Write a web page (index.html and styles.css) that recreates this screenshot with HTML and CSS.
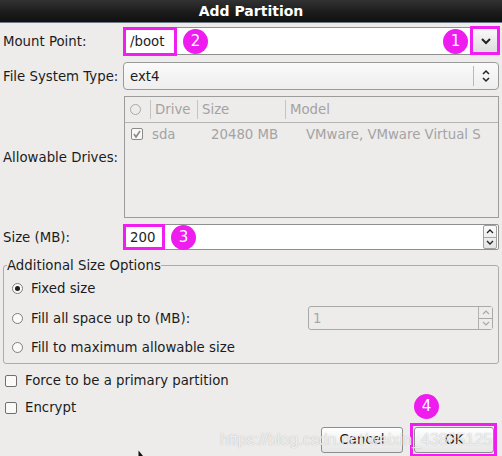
FILE: index.html
```html
<!DOCTYPE html>
<html>
<head>
<meta charset="utf-8">
<link rel="stylesheet" href="styles.css">
</head>
<body>
<div class="dialog">
  <div class="titlebar">Add Partition</div>
  <div class="content">
    <div class="row row-mount">
      <div class="label">Mount Point:</div>
      <div class="combo-entry">
        <div class="entry-text">/boot</div>
        <div class="drop-btn">
          <svg width="12" height="8" viewBox="0 0 12 8"><path d="M2 2 L6 6 L10 2" fill="none" stroke="#222" stroke-width="2"/></svg>
        </div>
        <div class="mark mark-boot"></div>
        <div class="badge badge-2">2</div>
        <div class="badge badge-1">1</div>
        <div class="mark mark-drop"></div>
      </div>
    </div>

    <div class="row row-fs">
      <div class="label">File System Type:</div>
      <div class="combo">
        <div class="entry-text">ext4</div>
        <div class="combo-arrows">
          <svg width="10" height="16" viewBox="0 0 10 16"><path d="M2 6 L5 3 L8 6 M2 10 L5 13 L8 10" fill="none" stroke="#222" stroke-width="1.5"/></svg>
        </div>
      </div>
    </div>

    <div class="row row-drives">
      <div class="label">Allowable Drives:</div>
      <div class="drives">
        <div class="drives-head">
          <div class="dh dh-check"><span class="ring"></span></div>
          <div class="dh dh-drive">Drive</div>
          <div class="dh dh-size">Size</div>
          <div class="dh dh-model">Model</div>
        </div>
        <div class="drives-row">
          <div class="dc dc-check"><span class="cb checked">
            <svg width="10" height="10" viewBox="0 0 10 10"><path d="M2 5 L4 8 L8 2" fill="none" stroke="#8a8a8a" stroke-width="1.6"/></svg>
          </span></div>
          <div class="dc dc-drive">sda</div>
          <div class="dc dc-size">20480 MB</div>
          <div class="dc dc-model">VMware, VMware Virtual S</div>
        </div>
      </div>
    </div>

    <div class="row row-size">
      <div class="label">Size (MB):</div>
      <div class="spin">
        <div class="entry-text">200</div>
        <div class="spin-arrows">
          <div class="sa"><svg width="8" height="6" viewBox="0 0 8 6"><path d="M1 5 L4 2 L7 5" fill="none" stroke="#222" stroke-width="1.3"/></svg></div>
          <div class="sa"><svg width="8" height="6" viewBox="0 0 8 6"><path d="M1 1 L4 4 L7 1" fill="none" stroke="#222" stroke-width="1.3"/></svg></div>
        </div>
        <div class="mark mark-size"></div>
        <div class="badge badge-3">3</div>
      </div>
    </div>

    <fieldset class="options">
      <legend>Additional Size Options</legend>
      <div class="opt"><span class="radio on"></span>Fixed size</div>
      <div class="opt opt-fill">
        <span class="radio"></span>Fill all space up to (MB):
        <div class="spin spin-dis">
          <div class="entry-text">1</div>
          <div class="spin-arrows">
            <div class="sa"><svg width="8" height="6" viewBox="0 0 8 6"><path d="M1 5 L4 2 L7 5" fill="none" stroke="#a8a8a8" stroke-width="1.2"/></svg></div>
            <div class="sa"><svg width="8" height="6" viewBox="0 0 8 6"><path d="M1 1 L4 4 L7 1" fill="none" stroke="#a8a8a8" stroke-width="1.2"/></svg></div>
          </div>
        </div>
      </div>
      <div class="opt"><span class="radio"></span>Fill to maximum allowable size</div>
    </fieldset>

    <div class="check check-first"><span class="cb"></span>Force to be a primary partition</div>
    <div class="check"><span class="cb"></span>Encrypt</div>

    <div class="buttons">
      <div class="watermark">https://blog.csdn.net/weixin_43885125</div>
      <div class="btn btn-cancel">Cancel</div>
      <div class="btn btn-ok">OK</div>
      <div class="mark mark-ok"></div>
      <div class="badge badge-4">4</div>
    </div>
  </div>
  <svg class="cursor" width="8" height="6" viewBox="0 0 8 6"><path d="M0.5 0.5 L0.5 6 L5 6 Z" fill="#111"/></svg>
</div>
</body>
</html>
```

FILE: styles.css
```css
html, body {
  margin: 0;
  padding: 0;
}
body {
  width: 502px;
  height: 456px;
  overflow: hidden;
  background: #edeceb;
  font-family: "DejaVu Sans", sans-serif;
  font-size: 13.3px;
  color: #1c1c1c;
}
.dialog {
  position: relative;
  width: 502px;
  height: 456px;
}
.titlebar {
  height: 22px;
  line-height: 23px;
  text-align: center;
  color: #fff;
  font-weight: bold;
  font-size: 14px;
  background: linear-gradient(#323232, #1a1a1a 60%, #111);
  border-bottom: 1px solid #6d7a86;
}
.content {
  padding: 4px 3px 0 3px;
}
.row {
  display: flex;
  align-items: center;
}
.label {
  width: 120px;
  flex: none;
}
.entry-text {
  flex: 1;
  padding-left: 6px;
}
.combo-entry {
  position: relative;
  flex: 1;
  height: 26px;
  display: flex;
  align-items: center;
  background: #fff;
  border: 1px solid #8f8f8f;
  border-radius: 2px;
}
.drop-btn {
  width: 27px;
  height: 26px;
  margin-right: -1px;
  display: flex;
  align-items: center;
  justify-content: center;
  background: linear-gradient(#fbfbfb, #dcdcdc);
  border-left: 1px solid #a8a8a8;
  border-bottom: 1px solid #7a97b3;
  box-sizing: border-box;
}
.row-fs {
  margin-top: 7px;
}
.combo {
  flex: 1;
  height: 26px;
  display: flex;
  align-items: center;
  border: 1px solid #9a9a9a;
  border-radius: 4px;
  background: linear-gradient(#fafafa, #eeeeee);
}
.combo-arrows {
  width: 24px;
  height: 20px;
  border-left: 1px solid #b9b9b9;
  display: flex;
  align-items: center;
  justify-content: center;
}
.row-drives {
  margin-top: 6px;
}
.drives {
  flex: 1;
  margin-left: 1px;
  height: 120px;
  border: 1px solid #9c9c9c;
  color: #a3a3a3;
}
.drives-head {
  display: flex;
  height: 25px;
  align-items: center;
  border-bottom: 1px solid #b4b4b4;
}
.dh {
  height: 19px;
  line-height: 19px;
  border-right: 1px solid #c4c4c4;
  padding-left: 4px;
}
.dh-check { width: 20px; padding-left: 5px; display: flex; align-items: center; }
.dh-drive { width: 42px; }
.dh-size { width: 83px; }
.dh-model { border-right: none; }
.ring {
  display: inline-block;
  width: 9px;
  height: 9px;
  border: 1px solid #a8a8a8;
  border-radius: 50%;
}
.drives-row {
  display: flex;
  height: 22px;
  align-items: center;
}
.dc-check { width: 21px; padding-left: 6px; display: flex; }
.dc-drive { width: 59px; }
.dc-size { width: 95px; }
.cb {
  display: inline-flex;
  align-items: center;
  justify-content: center;
  width: 10px;
  height: 10px;
  border: 1px solid #8a8a8a;
  border-radius: 2px;
  background: #f8f8f8;
  flex: none;
}
.row-size {
  margin-top: 6px;
}
.spin {
  position: relative;
  flex: 1;
  height: 24px;
  display: flex;
  align-items: center;
  background: #fff;
  border: 1px solid #8f8f8f;
  border-radius: 2px;
}
.spin-arrows {
  width: 12px;
  height: 22px;
  margin-right: 1px;
  display: flex;
  flex-direction: column;
  border: 1px solid #a0a0a0;
  border-radius: 2px;
  background: linear-gradient(#fafafa, #e4e4e4);
}
.sa {
  flex: 1;
  display: flex;
  align-items: center;
  justify-content: center;
}
.sa + .sa {
  border-top: 1px solid #a8a8a8;
}
.options {
  margin: 8px 0 0 0;
  padding: 1px 0 1px 0;
  border: 1px solid #acacac;
  border-radius: 3px;
}
.options legend {
  padding: 0;
  margin-left: 3px;
}
.opt {
  display: flex;
  align-items: center;
  height: 29px;
  padding-left: 8px;
}
.radio {
  width: 11px;
  height: 11px;
  border: 1px solid #7e7e7e;
  border-radius: 50%;
  background: #fafafa;
  margin-right: 8px;
  display: inline-flex;
  align-items: center;
  justify-content: center;
  box-sizing: border-box;
  flex: none;
}
.radio.on::after {
  content: "";
  width: 5px;
  height: 5px;
  border-radius: 50%;
  background: #1e1e1e;
}
.opt-fill {
  height: 30px;
}
.spin-dis {
  flex: none;
  width: 183px;
  height: 22px;
  margin-left: auto;
  margin-right: 5px;
  background: #edeceb;
  border-color: #a9a9a9;
  color: #a8a8a8;
  border-radius: 3px;
}
.spin-dis .entry-text {
  padding-left: 4px;
}
.spin-dis .spin-arrows {
  height: 22px;
  width: 13px;
  margin-right: 0;
  border: none;
  border-left: 1px solid #b0b0b0;
  border-radius: 0;
  background: #edeceb;
}
.check {
  display: flex;
  align-items: center;
  height: 27px;
  padding-left: 2px;
}
.check .cb {
  margin-right: 8px;
  background: #fafafa;
  border-color: #707070;
}
.check-first {
  margin-top: 3px;
}
.buttons {
  position: relative;
  display: flex;
  justify-content: flex-end;
  gap: 11px;
  margin-top: 6px;
  padding-right: 5px;
}
.btn {
  position: relative;
  height: 24px;
  line-height: 24px;
  text-align: center;
  border: 1px solid #8d8d8d;
  border-radius: 3px;
  background: linear-gradient(#ffffff, #e6e6e6);
  box-sizing: content-box;
}
.btn-cancel { width: 80px; }
.btn-ok { width: 78px; }

/* annotations */
.mark {
  position: absolute;
  border: 3px solid #f01ef0;
  box-sizing: border-box;
}
.badge {
  position: absolute;
  width: 25px;
  height: 25px;
  border-radius: 50%;
  background: #ee1cee;
  color: #fff;
  font-size: 15px;
  line-height: 25px;
  text-align: center;
}
.mark-boot { left: -1px; top: -1px; width: 54px; height: 29px; }
.badge-2 { left: 59px; top: 1px; }
.badge-1 { left: 319px; top: 1px; }
.mark-drop { right: -2px; top: -2px; width: 30px; height: 29px; }
.mark-size { left: -1px; top: -1px; width: 42px; height: 26px; }
.badge-3 { left: 47px; top: 0px; }
.mark-ok { right: 2px; top: -4px; width: 87px; height: 34px; }
.badge-4 { right: 60px; top: -33px; }
.watermark {
  position: absolute;
  left: 217px;
  top: 4px;
  z-index: 2;
  font-family: "Liberation Sans", Arial, sans-serif;
  font-size: 16px;
  color: rgba(255, 255, 255, 0.8);
  text-shadow: 0 0 1px rgba(110, 110, 110, 0.55);
  white-space: nowrap;
  pointer-events: none;
}
.cursor {
  position: absolute;
  left: 138px;
  top: 450px;
}
```
